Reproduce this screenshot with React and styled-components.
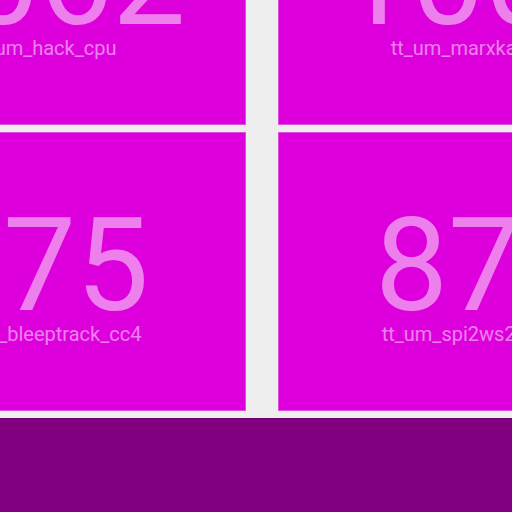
import React from "react";
import styled, { createGlobalStyle } from "styled-components";

const GlobalStyle = createGlobalStyle`
  html, body {
    margin: 0;
    padding: 0;
    background: #eeeeee;
    overflow: hidden;
    font-family: Roboto, "Liberation Sans", sans-serif;
  }
`;

const Page = styled.div`
  display: flex;
  flex-direction: column;
  width: 512px;
  height: 512px;
  overflow: hidden;
`;

const Grid = styled.div`
  display: grid;
  grid-template-columns: repeat(2, 413px);
  grid-auto-rows: 279px;
  column-gap: 32px;
  row-gap: 7px;
  width: max-content;
  margin: -154px 0 0 -167px;
  flex: none;
`;

const Tile = styled.div`
  background: #dd00dd;
  box-shadow: inset 0 0 0 1px #e24ee2;
  display: flex;
  flex-direction: column;
  align-items: center;
  padding-top: 78px;
  box-sizing: border-box;
  color: rgba(255, 255, 255, 0.5);
`;

const Count = styled.div`
  font-size: 130px;
  line-height: 112px;
  font-weight: 400;
  white-space: nowrap;
`;

const Name = styled.div`
  font-size: 20px;
  line-height: 20px;
  margin-top: 2px;
  padding-left: 10px;
  white-space: nowrap;
`;

const Footer = styled.div`
  flex: 1 0 auto;
  margin-top: 7px;
  background: #800080;
  border-top: 1px solid #6c006c;
`;

const tiles = [
  { count: "1062", name: "tt_um_hack_cpu" },
  { count: "1003", name: "tt_um_marxkar_jku_v2" },
  { count: "875", name: "tt_um_bleeptrack_cc4" },
  { count: "875", name: "tt_um_spi2ws2811x_top" },
];

export default function App() {
  return (
    <>
      <GlobalStyle />
      <Page>
        <Grid>
          {tiles.map((t, i) => (
            <Tile key={i}>
              <Count>{t.count}</Count>
              <Name>{t.name}</Name>
            </Tile>
          ))}
        </Grid>
        <Footer />
      </Page>
    </>
  );
}
